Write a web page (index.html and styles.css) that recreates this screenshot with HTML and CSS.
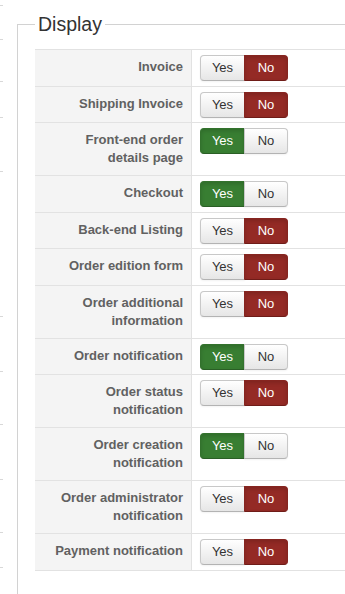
FILE: index.html
```html
<!DOCTYPE html>
<html lang="en">
<head>
    <meta charset="UTF-8">
    <meta name="viewport" content="width=device-width, initial-scale=1.0">
    <title>Display settings</title>
    <link rel="stylesheet" href="styles.css">
</head>
<body>
    <div class="page">
        <div class="gutter">
            <div></div><div></div><div></div><div></div><div></div><div></div>
            <div></div><div></div><div></div><div></div><div></div>
        </div>

        <fieldset class="display-set">
            <legend>Display</legend>
            <div class="settings">
                <div class="setting">
                    <div class="setting-label">Invoice</div>
                    <div class="setting-value">
                        <div class="yesno"><button class="yes">Yes</button><button class="no active">No</button></div>
                    </div>
                </div>
                <div class="setting">
                    <div class="setting-label">Shipping Invoice</div>
                    <div class="setting-value">
                        <div class="yesno"><button class="yes">Yes</button><button class="no active">No</button></div>
                    </div>
                </div>
                <div class="setting">
                    <div class="setting-label">Front-end order details page</div>
                    <div class="setting-value">
                        <div class="yesno"><button class="yes active">Yes</button><button class="no">No</button></div>
                    </div>
                </div>
                <div class="setting">
                    <div class="setting-label">Checkout</div>
                    <div class="setting-value">
                        <div class="yesno"><button class="yes active">Yes</button><button class="no">No</button></div>
                    </div>
                </div>
                <div class="setting">
                    <div class="setting-label">Back-end Listing</div>
                    <div class="setting-value">
                        <div class="yesno"><button class="yes">Yes</button><button class="no active">No</button></div>
                    </div>
                </div>
                <div class="setting">
                    <div class="setting-label">Order edition form</div>
                    <div class="setting-value">
                        <div class="yesno"><button class="yes">Yes</button><button class="no active">No</button></div>
                    </div>
                </div>
                <div class="setting">
                    <div class="setting-label">Order additional information</div>
                    <div class="setting-value">
                        <div class="yesno"><button class="yes">Yes</button><button class="no active">No</button></div>
                    </div>
                </div>
                <div class="setting">
                    <div class="setting-label">Order notification</div>
                    <div class="setting-value">
                        <div class="yesno"><button class="yes active">Yes</button><button class="no">No</button></div>
                    </div>
                </div>
                <div class="setting">
                    <div class="setting-label">Order status notification</div>
                    <div class="setting-value">
                        <div class="yesno"><button class="yes">Yes</button><button class="no active">No</button></div>
                    </div>
                </div>
                <div class="setting">
                    <div class="setting-label">Order creation notification</div>
                    <div class="setting-value">
                        <div class="yesno"><button class="yes active">Yes</button><button class="no">No</button></div>
                    </div>
                </div>
                <div class="setting">
                    <div class="setting-label">Order administrator notification</div>
                    <div class="setting-value">
                        <div class="yesno"><button class="yes">Yes</button><button class="no active">No</button></div>
                    </div>
                </div>
                <div class="setting">
                    <div class="setting-label">Payment notification</div>
                    <div class="setting-value">
                        <div class="yesno"><button class="yes">Yes</button><button class="no active">No</button></div>
                    </div>
                </div>
            </div>
        </fieldset>
    </div>
</body>
</html>
```

FILE: styles.css
```css
html,
body {
    margin: 0;
    padding: 0;
    height: 100%;
    overflow: hidden;
    background-color: #fff;
}

body {
    font-family: "Liberation Sans", Arial, sans-serif;
    font-size: 13px;
    color: #333;
}

.page {
    display: flex;
    width: 345px;
    height: 594px;
}

/* row edges of the neighbouring panel, cut off at the left */
.gutter {
    width: 3px;
    flex-shrink: 0;
}

.gutter div {
    border-bottom: 1px solid #d8d8d8;
}

.gutter div:nth-child(1) { height: 5px; }
.gutter div:nth-child(2) { height: 33px; }
.gutter div:nth-child(3) { height: 41px; }
.gutter div:nth-child(4) { height: 35px; }
.gutter div:nth-child(5) { height: 53px; }
.gutter div:nth-child(6) { height: 144px; }
.gutter div:nth-child(7) { height: 54px; }
.gutter div:nth-child(8) { height: 52px; }
.gutter div:nth-child(9) { height: 54px; }
.gutter div:nth-child(10) { height: 52px; }
.gutter div:nth-child(11) { height: 34px; }

/* the set runs on past the right and bottom edges, so only top and left borders show */
.display-set {
    flex: 1;
    min-width: 0;
    margin: 13px 0 0 14px;
    padding: 13px 0 0 17px;
    border: 1px solid #d2d2d2;
    border-right: none;
    border-bottom: none;
}

.display-set legend {
    padding: 0 3px;
    font-size: 19.5px;
    color: #333;
}

.settings {
    border-top: 1px solid #e2e2e2;
}

.setting {
    display: flex;
    border-bottom: 1px solid #e2e2e2;
}

.setting-label {
    width: 157px;
    flex-shrink: 0;
    box-sizing: border-box;
    padding: 8px 8px 8px 10px;
    background-color: #f4f4f4;
    border-right: 1px solid #e2e2e2;
    text-align: right;
    font-weight: bold;
    line-height: 18px;
    color: #616161;
}

.setting-value {
    padding: 5px 8px 4.5px;
}

.yesno {
    display: flex;
}

.yesno button {
    height: 26px;
    box-sizing: border-box;
    margin: 0;
    padding: 0;
    font-family: "Liberation Sans", Arial, sans-serif;
    font-size: 13px;
    line-height: 18px;
    color: #333;
    text-align: center;
    background-color: #f2f2f2;
    background-image: linear-gradient(#ffffff, #e6e6e6);
    border: 1px solid #c8c8c8;
    border-bottom-color: #b3b3b3;
    box-shadow: 0 1px 2px rgba(0, 0, 0, 0.05);
    cursor: pointer;
}

.yesno .yes {
    width: 45px;
    border-radius: 4px 0 0 4px;
}

.yesno .no {
    width: 44px;
    margin-left: -1px;
    border-radius: 0 4px 4px 0;
}

.yesno .no.active {
    color: #fff;
    background-image: none;
    background-color: #942a25;
    border-color: #862520;
    border-bottom-color: #6f1c18;
    box-shadow: inset 0 2px 4px rgba(0, 0, 0, 0.15);
}

.yesno .yes.active {
    color: #fff;
    background-image: none;
    background-color: #387e32;
    border-color: #33722d;
    border-bottom-color: #2a5f25;
    box-shadow: inset 0 2px 4px rgba(0, 0, 0, 0.15);
}
```
